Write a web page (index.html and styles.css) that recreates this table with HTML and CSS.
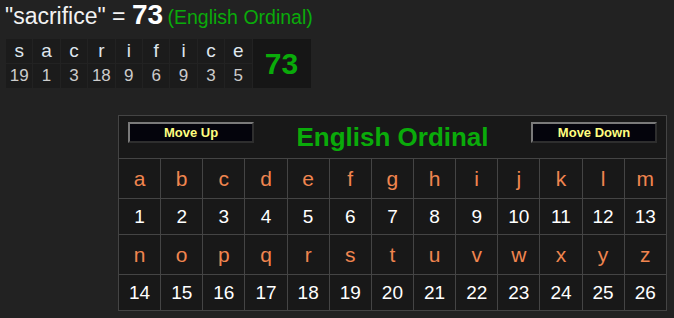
FILE: index.html
```html
<!DOCTYPE html>
<html>
<head>
<meta charset="utf-8">
<link rel="stylesheet" href="styles.css">
</head>
<body>
<div class="headline"><span class="word">"sacrifice" = </span><span class="total">73</span> <span class="cipher">(English Ordinal)</span></div>
<table class="breakdown">
  <tr class="letters"><td>s</td><td>a</td><td>c</td><td>r</td><td>i</td><td>f</td><td>i</td><td>c</td><td>e</td><td class="sum" rowspan="2">73</td></tr>
  <tr class="values"><td>19</td><td>1</td><td>3</td><td>18</td><td>9</td><td>6</td><td>9</td><td>3</td><td>5</td></tr>
</table>
<table class="chart">
  <tr class="head">
    <td colspan="13">
      <div class="head-bar">
        <button class="move">Move Up</button>
        <span class="title">English Ordinal</span>
        <button class="move">Move Down</button>
      </div>
    </td>
  </tr>
  <tr class="let"><td>a</td><td>b</td><td>c</td><td>d</td><td>e</td><td>f</td><td>g</td><td>h</td><td>i</td><td>j</td><td>k</td><td>l</td><td>m</td></tr>
  <tr class="num"><td>1</td><td>2</td><td>3</td><td>4</td><td>5</td><td>6</td><td>7</td><td>8</td><td>9</td><td>10</td><td>11</td><td>12</td><td>13</td></tr>
  <tr class="let"><td>n</td><td>o</td><td>p</td><td>q</td><td>r</td><td>s</td><td>t</td><td>u</td><td>v</td><td>w</td><td>x</td><td>y</td><td>z</td></tr>
  <tr class="num"><td>14</td><td>15</td><td>16</td><td>17</td><td>18</td><td>19</td><td>20</td><td>21</td><td>22</td><td>23</td><td>24</td><td>25</td><td>26</td></tr>
</table>
</body>
</html>
```
FILE: styles.css
```css
html, body {
  margin: 0;
  padding: 0;
  background: #222222;
  font-family: "Liberation Sans", Arial, sans-serif;
  color: #eeeeee;
}
body {
  padding: 0 0 0 5px;
}
.headline {
  height: 38px;
  line-height: 30px;
  white-space: nowrap;
}
.word {
  font-size: 23px;
  color: #f2f2f2;
}
.total {
  font-size: 28px;
  font-weight: bold;
  color: #ffffff;
}
.cipher {
  font-size: 19.5px;
  color: #0aab0a;
}
.breakdown {
  border-collapse: separate;
  border-spacing: 1px;
  margin-left: 0;
}
.breakdown td {
  background: #1b1b1b;
  width: 26.4px;
  height: 24px;
  padding: 0;
  text-align: center;
}
.breakdown .letters td {
  color: #dfe6ee;
  font-size: 19px;
}
.breakdown .values td {
  color: #cccccc;
  font-size: 17px;
}
.breakdown td.sum {
  width: 58px;
  background: #161616;
  color: #0aab0a;
  font-weight: bold;
  font-size: 30px;
}
.chart {
  margin: 26px 0 0 113px;
  border-collapse: collapse;
  background: #181818;
  width: 549px;
  table-layout: fixed;
}
.chart td {
  border: 1px solid #444444;
  padding: 0;
  text-align: center;
}
.chart .head td {
  height: 42px;
  vertical-align: top;
}
.head-bar {
  display: flex;
  justify-content: space-between;
  align-items: flex-start;
  padding: 0 9px;
}
.chart .title {
  color: #0aab0a;
  font-weight: bold;
  font-size: 26px;
  line-height: 42px;
}
.move {
  width: 126px;
  height: 21px;
  margin-top: 6px;
  background: #04040c;
  border: 2px solid;
  border-color: #7a7a7a #2e2e2e #2e2e2e #7a7a7a;
  color: #ffff80;
  font-family: "Liberation Sans", Arial, sans-serif;
  font-weight: bold;
  font-size: 13px;
  padding: 0;
}
.chart .let td {
  height: 39px;
  color: #f0854f;
  font-size: 21px;
}
.chart .num td {
  height: 35px;
  color: #ffffff;
  font-size: 19px;
}
```
